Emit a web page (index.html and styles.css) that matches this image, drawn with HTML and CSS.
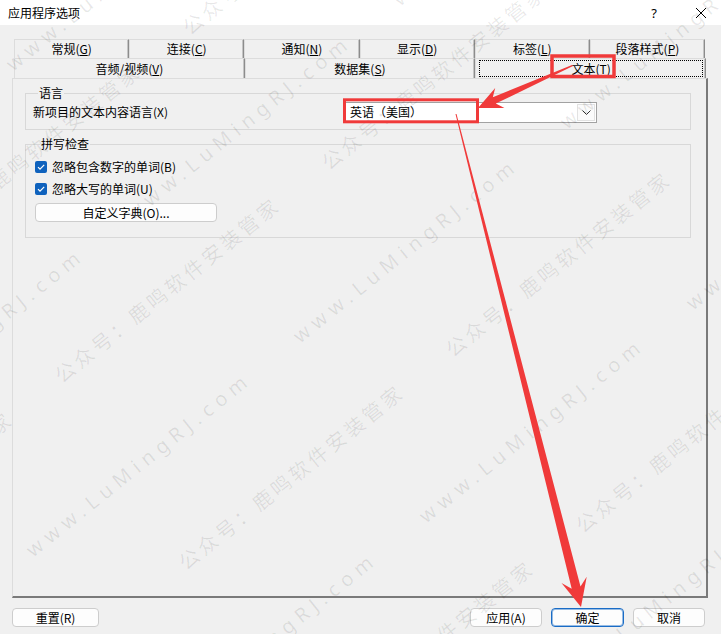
FILE: index.html
```html
<!DOCTYPE html>
<html lang="zh-CN">
<head>
<meta charset="utf-8">
<title>应用程序选项</title>
<link rel="stylesheet" href="styles.css">
</head>
<body>
<div class="titlebar">
  <span class="title">应用程序选项</span>
  <span class="help">?</span>
  <span class="close"><svg width="12" height="12" viewBox="0 0 12 12"><path d="M1 1L11 11M11 1L1 11" stroke="#000" stroke-width="1" fill="none"/></svg></span>
</div>
<div class="main">
  <div class="tabs">
    <div class="tabrow row1">
      <div class="tab">常规(<u>G</u>)</div>
      <div class="tab">连接(<u>C</u>)</div>
      <div class="tab">通知(<u>N</u>)</div>
      <div class="tab">显示(<u>D</u>)</div>
      <div class="tab">标签(<u>L</u>)</div>
      <div class="tab">段落样式(<u>P</u>)</div>
    </div>
    <div class="tabrow row2">
      <div class="tab">音频/视频(<u>V</u>)</div>
      <div class="tab">数据集(<u>S</u>)</div>
      <div class="tab active"><span class="focus">文本(<u>T</u>)</span></div>
    </div>
  </div>
  <div class="panel">
    <fieldset class="group group-lang">
      <legend>语言</legend>
      <div class="lang-row">
        <span class="lang-label">新项目的文本内容语言(X)</span>
        <div class="combo">
          <span class="combo-value">英语（美国）</span>
          <span class="combo-drop"><svg width="9" height="6" viewBox="0 0 9 6"><path d="M0.5 0.5L4.5 4.5L8.5 0.5" stroke="#333" stroke-width="1" fill="none"/></svg></span>
        </div>
      </div>
    </fieldset>
    <fieldset class="group group-spell">
      <legend>拼写检查</legend>
      <div class="spell-body">
        <label class="check"><span class="box"><svg width="12" height="12" viewBox="0 0 12 12"><path d="M3 6.2L5 8.2L9.2 3.8" stroke="#fff" stroke-width="1.2" fill="none"/></svg></span>忽略包含数字的单词(B)</label>
        <label class="check"><span class="box"><svg width="12" height="12" viewBox="0 0 12 12"><path d="M3 6.2L5 8.2L9.2 3.8" stroke="#fff" stroke-width="1.2" fill="none"/></svg></span>忽略大写的单词(U)</label>
        <button class="btn dict">自定义字典(O)...</button>
      </div>
    </fieldset>
  </div>
  <div class="footer">
    <button class="btn reset">重置(R)</button>
    <div class="footer-right">
      <button class="btn">应用(A)</button>
      <button class="btn primary">确定</button>
      <button class="btn">取消</button>
    </div>
  </div>
</div>
<svg class="annot" width="721" height="634" viewBox="0 0 721 634">
  <g class="wm-cn">
    <text x="-77" y="250" transform="rotate(-38.66 -77 250)">公众号：鹿鸣软件安装管家</text>
    <text x="190" y="36" transform="rotate(-38.66 190 36)">公众号：鹿鸣软件安装管家</text>
    <text x="-205" y="598" transform="rotate(-38.66 -205 598)">公众号：鹿鸣软件安装管家</text>
    <text x="62" y="384" transform="rotate(-38.66 62 384)">公众号：鹿鸣软件安装管家</text>
    <text x="329" y="171" transform="rotate(-38.66 329 171)">公众号：鹿鸣软件安装管家</text>
    <text x="186" y="571" transform="rotate(-38.66 186 571)">公众号：鹿鸣软件安装管家</text>
    <text x="453" y="358" transform="rotate(-38.66 453 358)">公众号：鹿鸣软件安装管家</text>
    <text x="316" y="747" transform="rotate(-38.66 316 747)">公众号：鹿鸣软件安装管家</text>
    <text x="583" y="534" transform="rotate(-38.66 583 534)">公众号：鹿鸣软件安装管家</text>
  </g>
  <g class="wm-url">
    <text x="13" y="72" transform="rotate(-38.66 13 72)">www.LuMingRJ.com</text>
    <text x="-134" y="434" transform="rotate(-38.66 -134 434)">www.LuMingRJ.com</text>
    <text x="133" y="221" transform="rotate(-38.66 133 221)">www.LuMingRJ.com</text>
    <text x="400" y="7" transform="rotate(-38.66 400 7)">www.LuMingRJ.com</text>
    <text x="33" y="558" transform="rotate(-38.66 33 558)">www.LuMingRJ.com</text>
    <text x="300" y="344" transform="rotate(-38.66 300 344)">www.LuMingRJ.com</text>
    <text x="567" y="130" transform="rotate(-38.66 567 130)">www.LuMingRJ.com</text>
    <text x="159" y="738" transform="rotate(-38.66 159 738)">www.LuMingRJ.com</text>
    <text x="426" y="524" transform="rotate(-38.66 426 524)">www.LuMingRJ.com</text>
    <text x="693" y="311" transform="rotate(-38.66 693 311)">www.LuMingRJ.com</text>
    <text x="564" y="689" transform="rotate(-38.66 564 689)">www.LuMingRJ.com</text>
  </g>
  <rect x="344.5" y="99.8" width="133" height="22" fill="none" stroke="#f03a3a" stroke-width="3"/>
  <rect x="552" y="56" width="62" height="20.5" fill="none" stroke="#f03a3a" stroke-width="3.5"/>
  <polygon fill="#f03a3a" points="572,65 492.8,97.2 495.2,87.9 478,108 504.4,107.9 495.8,103.6 573,66"/>
  <polygon fill="#f03a3a" points="456.5,113.9 580.5,586.5 586.7,576.7 581,607 561.5,583.1 571.7,588.7 455.5,114.1"/>
</svg>
</body>
</html>
```
FILE: styles.css
```css
* { box-sizing: border-box; }
html, body { margin: 0; padding: 0; }
body {
  width: 721px;
  height: 634px;
  overflow: hidden;
  position: relative;
  background: #f0f0f0;
  font-family: "Noto Sans CJK SC", "Noto Sans", sans-serif;
  font-size: 12px;
  color: #000;
}
.titlebar {
  height: 25px;
  background: #fff;
  display: flex;
  align-items: center;
  padding-left: 8px;
}
.title { flex: 1; line-height: 14px; }
.help { width: 46px; text-align: center; font-size: 13px; font-family: "Noto Sans", sans-serif; }
.close { width: 40px; display: flex; justify-content: center; margin-left: 4px; }

.main { padding: 14px 13px 0 12px; }

.tabs { margin: 0 2px; }
.tabrow { display: flex; }
.row1 { height: 19px; }
.row2 { height: 20px; }
.tab {
  flex: 1;
  display: flex;
  align-items: center;
  justify-content: center;
  border-top: 1px solid #dcdcdc;
  border-left: 1px solid #dcdcdc;
  border-right: 1px solid #8c8c8c;
  box-shadow: inset -1px 0 0 #c4c4c4;
  line-height: 14px;
  white-space: nowrap;
}
.row1 .tab:last-child { margin-right: 1px; }
.tab u { text-decoration-thickness: 1px; text-underline-offset: 1px; }
.tab.active { position: relative; }
.focus {
  position: absolute;
  left: 3px; right: 2px; top: 1px; bottom: 1px;
  border: 1px dotted #000;
  display: flex;
  align-items: center;
  justify-content: center;
}

.panel {
  height: 520px;
  border-top: 1px solid #dcdcdc;
  border-left: 1px solid #dcdcdc;
  border-right: 2px solid #7a7a7a;
  border-bottom: 2px solid #7a7a7a;
  padding: 7px 15px 0 12px;
}
.group {
  margin: 0;
  padding: 0;
  border: 1px solid #d8d8d8;
  min-width: 0;
}
.group legend {
  margin-left: 5px;
  padding: 0 1px;
  line-height: 14px;
}
.group-lang { padding: 2px 0 6px 7px; }
.lang-row { display: flex; align-items: center; height: 21px; }
.lang-label { width: 311px; line-height: 14px; margin-top: -2px; }
.combo {
  width: 253px;
  height: 21px;
  background: #fff;
  border: 1px solid #a2a2a2;
  display: flex;
  align-items: center;
  justify-content: space-between;
  padding: 0 1px 0 5px;
}
.combo-value { line-height: 14px; margin-top: -1px; }
.combo-drop {
  width: 18px;
  height: 17px;
  border: 1px solid #e2e2e2;
  background: #fbfbfb;
  display: flex;
  align-items: center;
  justify-content: center;
}

.group-spell { margin-top: 7px; padding: 5px 0 15px 9px; }
.spell-body { display: flex; flex-direction: column; align-items: flex-start; }
.check { display: flex; align-items: center; height: 22px; line-height: 14px; }
.box {
  width: 12px;
  height: 12px;
  border-radius: 2px;
  background: #0f62bd;
  margin-right: 5px;
  display: flex;
}
.btn {
  font-family: inherit;
  font-size: 12px;
  color: #000;
  background: #fdfdfd;
  border: 1px solid #cdcdcd;
  border-radius: 4px;
  height: 19px;
  padding: 0;
  line-height: 14px;
}
.dict { width: 182px; margin-top: 3px; }

.footer {
  display: flex;
  justify-content: space-between;
  align-items: center;
  margin-top: 10px;
  padding-right: 3px;
}
.reset { width: 87px; }
.footer-right { display: flex; gap: 9px; }
.footer-right .btn { width: 72px; }
.footer-right .primary { width: 73px; border-color: #1a6cc6; box-shadow: inset 0 0 0 1px rgba(26,108,198,0.45); }

.annot { position: absolute; left: 0; top: 0; pointer-events: none; }
.annot text { font-size: 20px; fill: rgba(0, 0, 0, 0.09); }
.wm-cn text { font-family: "Noto Sans CJK SC", sans-serif; letter-spacing: 3.5px; }
.wm-url text { font-family: "Noto Sans", sans-serif; letter-spacing: 6px; }
```
